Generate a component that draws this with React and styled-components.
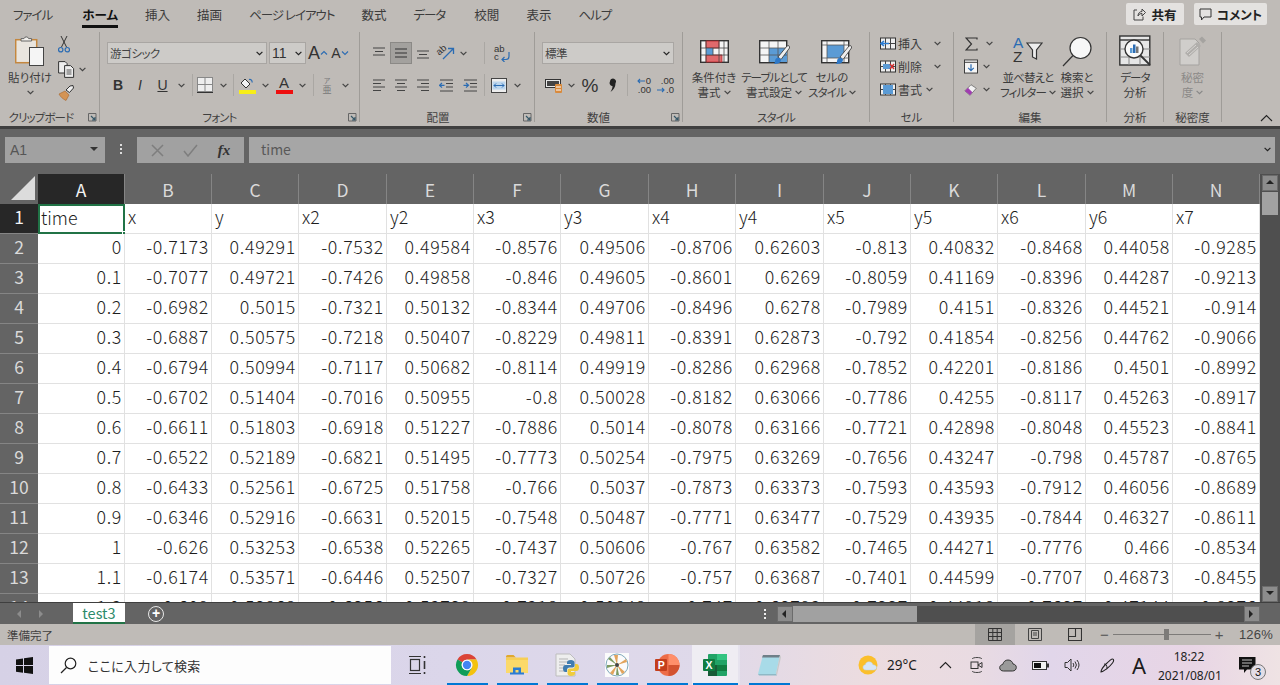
import React from "react";
import styled, { createGlobalStyle } from "styled-components";

const GlobalStyle = createGlobalStyle`
html, body {
  margin: 0;
  padding: 0;
  background: #bfbbb7;
}
* {
  box-sizing: border-box;
}
`

const jpFont = `"Noto Sans CJK JP", "Noto Sans", sans-serif`

const Page = styled.div`
width: 1280px;
height: 685px;
overflow: hidden;
display: flex;
flex-direction: column;
font-family: ${jpFont};
font-feature-settings: "palt";
color: #333;
`

/* ---------- tabs row ---------- */
const TabBar = styled.div`
height: 32px;
flex: none;
display: flex;
align-items: flex-start;
justify-content: space-between;
padding: 3px 13px 0 13px;
`
const TabList = styled.div`
display: flex;
gap: 27px;
`
const Tab = styled.div`
font-size: 12.5px;
line-height: 24px;
letter-spacing: ${p => (p.$kana ? "-1px" : "0")};
margin-right: ${p => p.$mr || 0}px;
color: ${p => (p.$active ? "#111" : "#3c3c3c")};
font-weight: ${p => (p.$active ? 700 : 400)};
border-bottom: ${p => (p.$active ? "3px solid #111" : "none")};
height: ${p => (p.$active ? "25px" : "24px")};
white-space: pre;
`
const TopButtons = styled.div`
display: flex;
gap: 10px;
`
const TopButton = styled.div`
height: 22px;
width: ${p => p.$w}px;
background: #e4e2e0;
border-radius: 2px;
display: flex;
align-items: center;
justify-content: center;
gap: 5px;
font-size: 12.5px;
font-weight: 700;
color: #222;
`

/* ---------- ribbon ---------- */
const Ribbon = styled.div`
height: 94px;
flex: none;
display: flex;
padding-bottom: 4px;
`
const Group = styled.section`
width: ${p => p.$w}px;
display: flex;
flex-direction: column;
border-right: 1px solid #9f9c98;
`
const GroupBody = styled.div`
height: 76px;
display: flex;
flex-direction: ${p => (p.$row ? "row" : "column")};
padding-left: ${p => p.$pl || 0}px;
`
const Caption = styled.div`
position: relative;
height: 14px;
line-height: 18px;
font-size: 11.5px;
text-align: center;
padding-right: ${p => p.$pr || 0}px;
letter-spacing: ${p => (p.$kana ? "-0.9px" : "0")};
color: #3f3f3f;
white-space: nowrap;
`
const Launcher = styled.span`
position: absolute;
right: 2px;
top: 5px;
display: flex;
`
const CollapseWrap = styled.div`
flex: 1;
display: flex;
justify-content: flex-end;
align-items: flex-end;
padding: 0 7px 0 0;
`
const ToolRow = styled.div`
display: flex;
align-items: center;
height: ${p => p.$h || 23}px;
margin-top: ${p => p.$mt || 0}px;
padding-left: ${p => p.$pl || 0}px;
`
const Slot = styled.span`
width: ${p => p.$w}px;
height: 22px;
display: flex;
flex: none;
align-items: center;
justify-content: center;
background: ${p => (p.$on ? "#a3a19e" : "transparent")};
border: ${p => (p.$on ? "1px solid #8b8986" : "none")};
`
const Sep = styled.span`
width: 1px;
height: 22px;
flex: none;
background: #aaa7a3;
margin-left: ${p => p.$ml || 0}px;
margin-right: ${p => p.$mr || 0}px;
`
const Combo = styled.div`
width: ${p => p.$w}px;
height: 22px;
flex: none;
margin-left: ${p => p.$ml || 0}px;
background: #cdcbc8;
border: 1px solid #a9a6a3;
display: flex;
align-items: center;
justify-content: space-between;
padding: 0 3px 0 2px;
font-size: 11.5px;
letter-spacing: -0.5px;
color: #444;
`
const BigButton = styled.div`
width: ${p => p.$w}px;
flex: none;
display: flex;
flex-direction: column;
align-items: center;
padding-top: ${p => p.$pt || 4}px;
font-size: 11.5px;
line-height: 15px;
color: ${p => (p.$dim ? "#8b8987" : "#3c3c3c")};
white-space: nowrap;
`
const BigIcon = styled.div`
height: ${p => p.$h || 34}px;
margin-left: ${p => p.$ml || 0}px;
display: flex;
align-items: flex-start;
justify-content: center;
`
const ButtonLine = styled.div`
display: flex;
align-items: center;
gap: 3px;
height: 15px;
letter-spacing: ${p => (p.$kana ? "-0.9px" : "0")};
`
const SmallColumn = styled.div`
display: flex;
flex-direction: column;
width: ${p => p.$w}px;
flex: none;
`
const CellLabel = styled.span`
font-size: 12px;
width: ${p => p.$w}px;
margin-left: 2px;
color: #3c3c3c;
`
const FontMark = styled.span`
font-family: "Liberation Sans", sans-serif;
font-size: ${p => p.$s || 14}px;
font-weight: ${p => (p.$b ? 700 : 400)};
font-style: ${p => (p.$i ? "italic" : "normal")};
text-decoration: ${p => (p.$u ? "underline" : "none")};
letter-spacing: 0;
color: #333;
line-height: 1;
`
const PhoneticMark = styled.span`
display: flex;
flex-direction: column;
align-items: center;
font-size: ${p => p.$s || 8}px;
line-height: 9px;
color: #777;
`

/* ---------- formula bar ---------- */
const FormulaBar = styled.div`
height: 48px;
flex: none;
background: #646464;
border-top: 3px solid #3f3f3f;
display: flex;
align-items: flex-start;
padding: 8px 5px 0 5px;
`
const NameBox = styled.div`
width: 100px;
height: 26px;
background: #a1a1a1;
display: flex;
align-items: center;
justify-content: space-between;
padding: 0 7px 0 5px;
font-family: "Liberation Sans", sans-serif;
font-size: 14px;
color: #555;
`
const Grip = styled.div`
width: 32px;
display: flex;
flex-direction: column;
align-items: center;
gap: 2px;
padding-top: 7px;
`
const Dot = styled.i`
width: 2px;
height: 2px;
background: ${p => p.$c || "#ddd"};
`
const FxBox = styled.div`
width: 107px;
height: 26px;
background: #a1a1a1;
display: flex;
align-items: center;
justify-content: space-around;
padding: 0 4px;
`
const FxMark = styled.span`
font-family: "Liberation Serif", serif;
font-style: italic;
font-weight: 700;
font-size: 15px;
color: #333;
`
const FormulaInput = styled.div`
flex: 1;
height: 26px;
margin-left: 5px;
background: #a6a6a6;
display: flex;
align-items: center;
justify-content: space-between;
padding: 0 4px 2px 12px;
font-size: 14px;
color: #595959;
`

/* ---------- sheet ---------- */
const SheetArea = styled.div`
height: 428px;
flex: none;
display: flex;
background: #646464;
`
const SheetBody = styled.div`
width: 1260px;
overflow: hidden;
`
const columns = "38px 87px 87px 87px 88px 87px 87px 88px 87px 88px 87px 87px 88px 87px 87px"
const SheetGrid = styled.div`
display: grid;
grid-template-columns: ${columns};
grid-auto-rows: 30px;
`
const Corner = styled.div`
background: #646464;
display: flex;
align-items: flex-end;
justify-content: flex-end;
padding: 0 2px 3px 0;
`
const ColHead = styled.div`
background: ${p => (p.$active ? "#272727" : "#646464")};
color: ${p => (p.$active ? "#f2f2f2" : "#dadada")};
border-right: 1px solid #858585;
display: flex;
align-items: center;
justify-content: center;
font-size: 17.5px;
`
const RowHead = styled.div`
background: ${p => (p.$active ? "#272727" : "#646464")};
color: ${p => (p.$active ? "#f2f2f2" : "#dadada")};
border-bottom: 1px solid #858585;
display: flex;
align-items: center;
justify-content: center;
padding-bottom: 5px;
font-size: 17.5px;
`
const Cell = styled.div`
position: relative;
background: #fff;
border-right: ${p => (p.$sel ? "2px solid #217346" : "1px solid #e1e1e1")};
border-bottom: ${p => (p.$sel ? "2px solid #217346" : "1px solid #e1e1e1")};
border-left: ${p => (p.$sel ? "2px solid #217346" : "none")};
border-top: ${p => (p.$sel ? "2px solid #217346" : "none")};
display: flex;
align-items: center;
justify-content: ${p => (p.$num ? "flex-end" : "flex-start")};
padding: 0 ${p => (p.$sel ? 2 : p.$num ? 2 : 3)}px 5px ${p => (p.$sel ? 1 : 3)}px;
font-size: 17.8px;
font-weight: 300;
letter-spacing: ${p => (p.$num ? "0.7px" : "0")};
color: #1d1d1d;
white-space: nowrap;
`
const Handle = styled.i`
position: absolute;
right: -4px;
bottom: -4px;
width: 5px;
height: 5px;
background: #217346;
border: 1px solid #fff;
`
const VScroll = styled.div`
width: 20px;
display: flex;
flex-direction: column;
align-items: center;
gap: 1px;
padding: 1px 0 0 0;
background: #4f4f4f;
`
const ScrollButton = styled.div`
width: ${p => p.$w || 16}px;
height: ${p => p.$h || 16}px;
flex: none;
background: #8c8c8c;
border: 1px solid #6b6b6b;
display: flex;
align-items: center;
justify-content: center;
`
const VThumb = styled.div`
width: 16px;
height: 23px;
background: #a1a1a1;
`
const Spacer = styled.div`
flex: 1;
`

/* ---------- sheet tabs ---------- */
const SheetTabs = styled.div`
height: 22px;
flex: none;
background: #646464;
border-top: 1px solid #3f3f3f;
display: flex;
align-items: center;
padding-left: 16px;
`
const NavArrows = styled.div`
width: 57px;
flex: none;
display: flex;
gap: 14px;
`
const SheetTab = styled.div`
width: 52px;
flex: none;
height: 21px;
margin-top: -1px;
background: #fff;
border-bottom: 2px solid #217346;
color: #2b8a6a;
font-size: 14.5px;
line-height: 19px;
text-align: center;
`
const AddSheet = styled.div`
width: 16px;
flex: none;
height: 16px;
margin-left: 23px;
border: 1.5px solid #e8e8e8;
border-radius: 50%;
color: #fff;
font: 700 14px/13px "Liberation Sans", sans-serif;
text-align: center;
`
const HScroll = styled.div`
flex: none;
width: 483px;
height: 16px;
display: flex;
background: #4f4f4f;
`
const HGrip = styled(Grip)`
width: 24px;
flex: none;
padding-top: 0;
margin-left: 589px;
`
const HThumb = styled.div`
width: 124px;
height: 16px;
background: #a1a1a1;
`

/* ---------- status bar ---------- */
const StatusBar = styled.div`
height: 21px;
flex: none;
display: flex;
align-items: center;
font-size: 11.5px;
color: #3f3f3f;
padding-left: 7px;
`
const ViewButton = styled.div`
width: 40px;
height: 21px;
display: flex;
align-items: center;
justify-content: center;
background: ${p => (p.$on ? "#a5a3a0" : "transparent")};
`
const StatusRight = styled.div`
margin-left: auto;
display: flex;
align-items: center;
`
const Zoom = styled.div`
display: flex;
align-items: center;
width: 133px;
gap: 4px;
padding-left: 5px;
font: 400 15px/1 "Liberation Sans", sans-serif;
color: #555;
`
const ZoomTrack = styled.div`
position: relative;
width: 98px;
height: 1px;
background: #7d7b79;
`
const ZoomThumb = styled.i`
position: absolute;
left: 51px;
top: -5px;
width: 5px;
height: 11px;
background: #7d7b79;
`
const ZoomValue = styled.div`
width: 52px;
padding-right: 7px;
text-align: right;
font-family: "Liberation Sans", sans-serif;
font-size: 13px;
letter-spacing: 0.2px;
color: #444;
`

/* ---------- windows taskbar ---------- */
const Taskbar = styled.div`
height: 40px;
flex: none;
display: flex;
align-items: center;
background: linear-gradient(90deg, #d6d1e6 0%, #dbd6ea 35%, #dfd9ea 55%, #ecdcdf 68%, #e9dbe2 76%, #e1d6ea 82%, #e8d5e5 93%, #efe3e4 100%);
`
const StartBtn = styled.div`
width: 49px;
display: flex;
justify-content: center;
`
const SearchBox = styled.div`
width: 342px;
height: 38px;
background: #fdfdfd;
display: flex;
align-items: center;
gap: 11px;
padding-left: 11px;
font-size: 13px;
color: #333;
letter-spacing: 0.35px;
`
const TaskItems = styled.div`
display: flex;
height: 40px;
margin-left: 1px;
`
const TaskItem = styled.div`
position: relative;
width: ${p => p.$w || 50}px;
height: 40px;
display: flex;
align-items: center;
justify-content: center;
background: ${p => (p.$on ? "#efedf3" : "transparent")};
border-right: ${p => (p.$on ? "2px solid #e6e3ee" : "none")};
`
const RunBar = styled.i`
position: absolute;
bottom: 0;
left: ${p => p.$l ?? 5}px;
right: ${p => p.$r ?? 4}px;
height: 2px;
background: #0078d4;
`
const Tray = styled.div`
display: flex;
align-items: center;
margin-left: auto;
height: 40px;
`
const TrayItem = styled.div`
width: ${p => p.$w}px;
flex: none;
display: flex;
align-items: center;
justify-content: center;
padding-left: ${p => p.$pl || 0}px;
font-family: "Noto Sans", sans-serif;
font-size: ${p => p.$fs || 13.5}px;
color: #1c1c1c;
`
const Clock = styled.div`
width: 62px;
flex: none;
margin-left: 8px;
padding-top: 1px;
text-align: center;
font-family: "Noto Sans", sans-serif;
font-size: 12px;
line-height: 19px;
color: #222;
white-space: nowrap;
`
const Notice = styled.div`
position: relative;
width: 60px;
flex: none;
padding-right: 6px;
display: flex;
justify-content: center;
`
const NoticeBadge = styled.span`
position: absolute;
right: 14px;
bottom: -6px;
width: 16px;
height: 16px;
border-radius: 50%;
background: #e2dde6;
border: 1px solid #777;
font: 400 11px/14px "Liberation Sans", sans-serif;
text-align: center;
color: #111;
`

/* ---------- icons ---------- */
const Chev = ({ c = "#444" }) => (
  <svg width="7" height="5" viewBox="0 0 7 5"><path d="M.6.8 3.5 3.7 6.4.8" fill="none" stroke={c} strokeWidth="1.2" /></svg>
)
const Corner45 = () => (
  <svg width="9" height="9" viewBox="0 0 9 9"><path d="M.5.5h7.5v7.5H.5z" fill="none" stroke="#666" /><path d="M3 3 7 7M4 7h3V4" fill="none" stroke="#356" strokeWidth="1.1" /></svg>
)
const Paste = () => (
  <svg width="30" height="30" viewBox="0 0 30 30">
    <rect x=".7" y="3.7" width="21" height="23" fill="#e9e5df" stroke="#c4873f" strokeWidth="1.5" />
    <path d="M6 5V2.6h3a2.4 2.4 0 0 1 4.6 0h3V5z" fill="#f1efec" stroke="#666" />
    <rect x="14.5" y="11.5" width="14" height="18" fill="#f5f5f5" stroke="#444" />
  </svg>
)
const Scissors = () => (
  <svg width="12" height="17" viewBox="0 0 12 17">
    <path d="M3 0l5.500 11M9 0 3.500 11" stroke="#333" fill="none" />
    <circle cx="2.700" cy="13.700" r="2.200" fill="none" stroke="#2b6cb3" strokeWidth="1.200" />
    <circle cx="9.300" cy="13.700" r="2.200" fill="none" stroke="#2b6cb3" strokeWidth="1.200" />
  </svg>
)
const Copy = () => (
  <svg width="17" height="17" viewBox="0 0 17 17">
    <path d="M.6.6h6.500l2 2V12H.6z" fill="#eee" stroke="#333" />
    <path d="M6.600 4.600h6l3 3v8.800h-9z" fill="#eee" stroke="#333" />
    <path d="M8.500 9h5M8.500 11h5M8.500 13h5" stroke="#555" />
  </svg>
)
const Painter = () => (
  <svg width="17" height="17" viewBox="0 0 17 17">
    <path d="M1 10l6-3 4 4-3 5.500C5 15 2.500 13 1 10z" fill="#d49455" stroke="#a8652a" strokeWidth=".6" />
    <path d="M8 6l4-4 3-.5.500 2.500-4 4.500z" fill="#eee" stroke="#333" />
  </svg>
)
const FontStep = ({ down }) => (
  <svg width="8" height="6" viewBox="0 0 8 6">
    <path d={down ? "M1 1.500l3 3 3-3" : "M1 4.500l3-3 3 3"} fill="none" stroke="#2b6cb3" strokeWidth="1.100" />
  </svg>
)
const BorderIcon = () => (
  <svg width="16" height="16" viewBox="0 0 16 16">
    <rect x=".5" y=".5" width="15" height="14" fill="#eee" stroke="#888" />
    <path d="M8 .5v14M.5 7.500h15" stroke="#888" />
    <path d="M0 15.500h16" stroke="#333" />
  </svg>
)
const FillIcon = () => (
  <svg width="17" height="17" viewBox="0 0 17 17">
    <path d="M6 2l5 5-4 4-5-5z" fill="#f2f2f2" stroke="#333" />
    <path d="M10 2.500c2-.5 3.500 1 3 3" fill="none" stroke="#2b6cb3" strokeWidth="1.200" />
    <rect y="13" width="17" height="4" fill="#f7ee18" />
  </svg>
)
const ColorMark = styled.span`
display: flex;
flex-direction: column;
align-items: center;
width: 17px;
font: 400 15px/14px "Liberation Sans", sans-serif;
color: #333;
`
const ColorBar = styled.i`
width: 17px;
height: 4px;
background: #ee0f0f;
`
const Lines = ({ d, on }) => (
  <svg width="14" height="14" viewBox="0 0 14 14"><path d={d} fill="none" stroke={on ? "#333" : "#444"} strokeWidth="1.200" /></svg>
)
const OrientMark = styled.span`
position: relative;
width: 20px;
height: 18px;
display: block;
`
const OrientText = styled.span`
position: absolute;
left: 0;
top: 1px;
font: 400 9.5px/10px "Liberation Sans", sans-serif;
color: #333;
transform: rotate(-42deg);
`
const OrientArrow = styled.svg`
position: absolute;
left: 0;
top: 0;
`
const Orient = () => (
  <OrientMark>
    <OrientText>ab</OrientText>
    <OrientArrow width="20" height="18" viewBox="0 0 20 18">
      <path d="M7 15 17 5M12 4.500h5.500v5.500" fill="none" stroke="#2b6cb3" strokeWidth="1.300" />
    </OrientArrow>
  </OrientMark>
)
const WrapMark = styled.span`
position: relative;
display: flex;
flex-direction: column;
width: 16px;
font: 400 9.5px/8.5px "Liberation Sans", sans-serif;
color: #333;
`
const WrapArrow = styled.svg`
position: absolute;
right: 0;
bottom: 0;
`
const Wrap = () => (
  <WrapMark>
    <span>ab</span>
    <span>c</span>
    <WrapArrow width="10" height="11" viewBox="0 0 10 11">
      <path d="M9 1v4.500a3 3 0 0 1-3 3H2M4.500 6 2 8.500 4.500 11" fill="none" stroke="#2b6cb3" strokeWidth="1.200" />
    </WrapArrow>
  </WrapMark>
)
const Indent = ({ out }) => (
  <svg width="15" height="13" viewBox="0 0 15 13">
    <path d="M1 1h13M7 4.500h7M7 8h7M1 12h13" stroke="#444" fill="none" />
    <path d={out ? "M5.500 6.300H.500M3 4 .500 6.300 3 8.600" : "M.500 6.300h5M3 4l2.500 2.300L3 8.600"} stroke="#2b6cb3" strokeWidth="1.200" fill="none" />
  </svg>
)
const Merge = () => (
  <svg width="16" height="15" viewBox="0 0 16 15">
    <rect x=".5" y=".5" width="15" height="14" fill="#eee" stroke="#444" />
    <rect x="1.500" y="3.500" width="13" height="8" fill="#bcd6ee" />
    <path d="M3 7.500h10M5 5.500l-2 2 2 2M11 5.500l2 2-2 2" stroke="#2b6cb3" fill="none" />
  </svg>
)
const Currency = () => (
  <svg width="17" height="17" viewBox="0 0 17 17">
    <rect x=".5" y="2.500" width="15" height="8" fill="#e8e8e8" stroke="#333" />
    <rect x="2" y="4" width="12" height="5" fill="#444" />
    <rect x="10" y="7" width="7" height="9" rx="1" fill="#d98a3c" />
    <path d="M11 10h5M11 13h5" stroke="#fff" />
  </svg>
)
const Comma = () => (
  <svg width="10" height="15" viewBox="0 0 10 15"><path d="M2 3.500a3 3 0 1 1 5.500 1.700C7.500 9 5.500 12 2.500 14c1.500-2.500 2-4 2-6A3 3 0 0 1 2 3.500z" fill="#222" /></svg>
)
const DecimalMark = styled.span`
display: flex;
flex-direction: column;
width: 20px;
font: 400 9.5px/9px "Liberation Sans", sans-serif;
color: #333;
`
const DecimalRow = styled.span`
display: flex;
align-items: center;
gap: 1px;
align-self: flex-end;
`
const Arrow = ({ left }) => (
  <svg width="8" height="6" viewBox="0 0 8 6"><path d={left ? "M8 3H1M3 1 1 3l2 2" : "M0 3h7M5 1l2 2-2 2"} stroke="#2b6cb3" fill="none" strokeWidth="1.100" /></svg>
)
const Decimal = ({ more }) => (
  more
    ? <DecimalMark>
        <DecimalRow><Arrow left />0</DecimalRow>
        <DecimalRow>.00</DecimalRow>
      </DecimalMark>
    : <DecimalMark>
        <DecimalRow>.00</DecimalRow>
        <DecimalRow><Arrow />.0</DecimalRow>
      </DecimalMark>
)
const CondFormat = () => (
  <svg width="29" height="23" viewBox="0 0 29 23">
    <rect x=".7" y=".7" width="27.600" height="21.600" fill="#f5f5f5" stroke="#333" strokeWidth="1.400" />
    <path d="M6 1h13v7H6zM6 15h16v7H6z" fill="#e0696c" stroke="#b3272c" strokeWidth=".8" />
    <rect x="6" y="8" width="7" height="7" fill="#5b9bd5" />
    <path d="M6 1v21M13 8v7M19 1v21M24 1v21M1 8h27M1 15h27" stroke="#444" fill="none" strokeWidth=".8" />
  </svg>
)
const Brush = () => (
  <g>
    <path d="M28 6 19 17l3 2.500L30.500 8c.5-2-1-3-2.500-2z" fill="#eee" stroke="#333" strokeWidth=".8" />
    <path d="M15 24c3 0 7-.5 7-4.500-1-2-3.500-2.500-5-1-1.500 1.500-.5 4-2 5.500z" fill="#2d78c8" />
  </g>
)
const TableFormat = () => (
  <svg width="31" height="27" viewBox="0 0 31 27">
    <rect x=".7" y=".7" width="27" height="22" fill="#f5f5f5" stroke="#333" strokeWidth="1.400" />
    <rect x="10" y="8" width="18" height="14" fill="#5b9bd5" />
    <path d="M10 1v21M19 1v21M1 8h27M1 15h27" stroke="#555" strokeWidth=".8" />
    <Brush />
  </svg>
)
const CellStyle = () => (
  <svg width="31" height="27" viewBox="0 0 31 27">
    <rect x=".7" y=".7" width="27" height="22" fill="#f5f5f5" stroke="#333" strokeWidth="1.400" />
    <rect x="6" y="5" width="17" height="13" fill="#5b9bd5" />
    <path d="M1 5h27M1 18h27M6 1v21M23 1v21" stroke="#555" strokeWidth=".8" />
    <Brush />
  </svg>
)
const CellOp = ({ kind }) => (
  <svg width="16" height="15" viewBox="0 0 16 15">
    <rect x=".5" y="2" width="15" height="11" fill="#eee" stroke="#333" />
    <path d="M5.500 2v11M10.500 2v11M.5 7.500h15" stroke="#444" />
    {kind === "ins" && <path d="M1 7.500h8M4 5 1 7.500 4 10" stroke="#2b7cd3" strokeWidth="1.600" fill="none" />}
    {kind === "del" && <g><rect x="3" y="5" width="8" height="5" fill="#5b9bd5" /><path d="M10 5l4 5M14 5l-4 5" stroke="#d12c2c" strokeWidth="1.400" /></g>}
    {kind === "fmt" && <rect x="3" y="3" width="10" height="9" fill="#5b9bd5" />}
  </svg>
)
const Sigma = () => (
  <svg width="13" height="14" viewBox="0 0 13 14"><path d="M12 2.500V1H1l5.500 6L1 13h11v-1.500" fill="none" stroke="#333" strokeWidth="1.200" /></svg>
)
const FillDown = () => (
  <svg width="15" height="15" viewBox="0 0 15 15">
    <rect x=".5" y=".5" width="14" height="14" fill="#f5f5f5" stroke="#333" />
    <path d="M.5 3h14" stroke="#333" />
    <path d="M7.500 5v7M4.500 9l3 3 3-3" stroke="#2b6cb3" strokeWidth="1.300" fill="none" />
  </svg>
)
const Eraser = () => (
  <svg width="16" height="14" viewBox="0 0 16 14">
    <path d="M1 8l7-7 6 4-7 8z" fill="#f2f2f2" stroke="#333" strokeWidth=".6" />
    <path d="M1 8l3.500-3.500 5 5L7 13z" fill="#a03db0" />
  </svg>
)
const SortWrap = styled.div`
display: flex;
align-items: flex-start;
width: 30px;
`
const SortLetters = styled.div`
display: flex;
flex-direction: column;
font: 400 15.5px/14px "Liberation Sans", sans-serif;
color: #333;
width: 13px;
flex: none;
`
const SortA = styled.span`
color: #2b6cb3;
`
const SortFilter = () => (
  <SortWrap>
    <SortLetters><SortA>A</SortA><span>Z</span></SortLetters>
    <svg width="17" height="24" viewBox="0 0 17 24"><path d="M1 7h15l-5.500 7v9l-4-2v-7z" fill="#eee" stroke="#333" strokeWidth="1.200" /></svg>
  </SortWrap>
)
const Search = () => (
  <svg width="30" height="31" viewBox="0 0 30 31">
    <circle cx="18.500" cy="12" r="10.500" fill="#f7f7f7" stroke="#333" strokeWidth="1.200" />
    <path d="M11 19.500 1 30" stroke="#333" strokeWidth="1.200" />
  </svg>
)
const Analyze = () => (
  <svg width="32" height="32" viewBox="0 0 32 32">
    <rect x=".8" y="1" width="30" height="29" fill="#e6e6e6" stroke="#333" strokeWidth="1.400" />
    <path d="M1 5h30" stroke="#333" strokeWidth="1.400" />
    <path d="M1 14h30M1 22h30M10 5v25M21 5v25" stroke="#888" />
    <circle cx="15" cy="14" r="9" fill="#fafafa" stroke="#333" strokeWidth="1.400" />
    <path d="M21.500 20.500 31 30" stroke="#333" strokeWidth="1.800" />
    <rect x="11" y="13" width="2.500" height="5" fill="#5b9bd5" />
    <rect x="14" y="9.500" width="2.500" height="8.500" fill="#2b6cb3" />
    <rect x="17" y="11.500" width="2.500" height="6.500" fill="#777" />
  </svg>
)
const Sensitivity = () => (
  <svg width="28" height="30" viewBox="0 0 28 30">
    <path d="M1 3h15l4 4v22H1z" fill="#d0cecb" stroke="#a5a3a0" />
    <path d="M6 17 18 6l4 4-12 11z" fill="#b0aeab" />
    <path d="M20 3l3-2.500 4 4-3 3z" fill="#a5a3a0" />
    <path d="M8 17l9-8M10 19l9-8" stroke="#d8d6d3" />
  </svg>
)
const ShareIcon = () => (
  <svg width="13" height="13" viewBox="0 0 13 13"><path d="M4 2H1v10h9V8.500M5 8c0-3 2-4.500 4-4.500V1l3.500 3.500L9 8V5.500C7.500 5.500 6 6 5 8z" fill="none" stroke="#444" /></svg>
)
const CommentIcon = () => (
  <svg width="13" height="13" viewBox="0 0 13 13"><path d="M1 1h11v8H5l-2.500 3V9H1z" fill="none" stroke="#333" /></svg>
)
const Tri = ({ dir = "up", c = "#222" }) => {
  const d = { up: "M0 5 4 1l4 4z", down: "M0 1h8L4 5z", left: "M5 0v8L1 4z", right: "M1 0v8l4-4z" }[dir]
  return <svg width="8" height="8" viewBox="0 0 8 8"><path d={d} fill={c} /></svg>
}
const WinLogo = () => (
  <svg width="17" height="17" viewBox="0 0 17 17"><path d="M0 2.400 7 1.400v6.700H0zM8 1.300 17 0v8.100H8zM0 9h7v6.700l-7-1zM8 9h9v8l-9-1.300z" fill="#111" /></svg>
)
const Magnifier = () => (
  <svg width="17" height="17" viewBox="0 0 17 17"><circle cx="10.500" cy="6.500" r="5.300" fill="none" stroke="#222" strokeWidth="1.200" /><path d="M6.500 10.500 1 16" stroke="#222" strokeWidth="1.300" /></svg>
)
const TaskView = () => (
  <svg width="19" height="20" viewBox="0 0 19 20">
    <path d="M1 1.500h12M1 18.500h12" stroke="#333" strokeWidth="1.200" />
    <rect x="2.500" y="4.500" width="9" height="11" fill="none" stroke="#333" strokeWidth="1.200" />
    <path d="M16.500 1v2M16.500 6v8M16.500 17v2" stroke="#333" strokeWidth="1.600" />
  </svg>
)
const Chrome = () => (
  <svg width="24" height="24" viewBox="0 0 24 24">
    <path d="M12 1A11 11 0 0 1 21.530 6.500H12A5.500 5.500 0 0 0 7.240 9.250L2.470 6.500A11 11 0 0 1 12 1z" fill="#db4437" />
    <path d="M21.530 6.500A11 11 0 0 1 12 23L16.760 14.750A5.500 5.500 0 0 0 12 6.500z" fill="#f4c20d" />
    <path d="M2.470 6.500A11 11 0 0 0 12 23L16.760 14.750A5.500 5.500 0 0 1 7.240 9.250z" fill="#0f9d58" />
    <circle cx="12" cy="12" r="5.300" fill="#fff" />
    <circle cx="12" cy="12" r="4.200" fill="#4285f4" />
  </svg>
)
const Folder = () => (
  <svg width="22" height="20" viewBox="0 0 22 20">
    <path d="M0 1.500A1.500 1.500 0 0 1 1.500 0h6L10 2.500H0z" fill="#e0a82e" />
    <rect y="2.500" width="22" height="15.500" fill="#f7cf55" />
    <path d="M0 5h22v13H0z" fill="#fbd96a" />
    <path d="M7 18v-5.500h8V18h-2.500v-3h-3v3z" fill="#2b7cd3" />
    <rect x="4" y="17.500" width="14" height="2" fill="#2b7cd3" />
  </svg>
)
const PyDoc = () => (
  <svg width="24" height="24" viewBox="0 0 24 24">
    <path d="M1 1h14l5 5v17H1z" fill="#eeeeee" stroke="#bdbdbd" />
    <path d="M4 6h9M4 9h11M4 12h6M4 15h6M4 18h7" stroke="#b5b5b5" />
    <path d="M16 7c-3 0-4 1-4 2.500V11h4v1h-5.500C9 12 8 13 8 15.500S9 19 10.500 19H12v-2c0-1.500 1-2.500 2.500-2.500h3c1.200 0 2-.8 2-2V9.500C19.500 8 18 7 16 7z" fill="#3f7cb0" />
    <path d="M16 23c3 0 4-1 4-2.500V19h-4v-1h5.500c1.500 0 2.500-1 2.500-3.500S23 11 21.500 11H20v2c0 1.500-1 2.500-2.500 2.500h-3c-1.200 0-2 .8-2 2v3C12.500 22 14 23 16 23z" fill="#f0cc3d" />
  </svg>
)
const Pinwheel = () => (
  <svg width="24" height="24" viewBox="0 0 24 24">
    <rect width="24" height="24" fill="#fbfbfb" />
    <circle cx="12" cy="12" r="11" fill="none" stroke="#7fa9bb" strokeWidth="1" />
    <path d="M12 12 9 2h4zM12 12l9-6 1 3zM12 12l8 7-3 2zM12 12 8 22l-3-2z" fill="#e2a45c" />
    <path d="M12 12 3 6l2-2zM12 12H2v3zM12 12l2 10h-3z" fill="#7c9a62" />
    <circle cx="12" cy="12" r="2" fill="#444" />
  </svg>
)
const Ppt = () => (
  <svg width="25" height="24" viewBox="0 0 25 24">
    <circle cx="13.500" cy="12" r="11" fill="#ed6c47" />
    <path d="M13.500 1a11 11 0 0 1 11 11h-11z" fill="#ff8f6b" />
    <path d="M13.500 12h11a11 11 0 0 1-11 11z" fill="#d35230" />
    <rect x="0" y="6" width="12" height="12" rx="1" fill="#c43e1c" />
    <text x="2.800" y="15.600" fontFamily="Liberation Sans" fontWeight="700" fontSize="10.500" fill="#fff">P</text>
  </svg>
)
const Excel = () => (
  <svg width="24" height="22" viewBox="0 0 24 22">
    <rect x="5" y="0" width="19" height="22" rx="1" fill="#21a366" />
    <rect x="14" y="0" width="10" height="6" fill="#33c481" />
    <rect x="5" y="11" width="9" height="11" fill="#185c37" />
    <rect x="14" y="11" width="10" height="6" fill="#107c41" />
    <rect x="0" y="5" width="12" height="12" rx="1" fill="#107c41" />
    <text x="2.500" y="14.700" fontFamily="Liberation Sans" fontWeight="700" fontSize="10.500" fill="#fff">X</text>
  </svg>
)
const Notepad = () => (
  <svg width="24" height="22" viewBox="0 0 24 22">
    <path d="M6 1h17l-4 19H1z" fill="#a8dbe8" />
    <path d="M6 1h17l-.6 2.500H5z" fill="#6f7f88" />
    <path d="M23 1l1 2-4 18-1-1z" fill="#c9c9c9" />
    <path d="M1 20h18l1 1.500H2z" fill="#8fb9c6" />
  </svg>
)
const Weather = () => (
  <svg width="22" height="22" viewBox="0 0 22 22">
    <circle cx="10" cy="11" r="9.500" fill="#fbbf2b" />
    <path d="M8 16c-2 0-3-1.300-3-2.700 0-1.300 1-2.300 2.300-2.500.5-2 2-3 3.700-3 2 0 3.500 1.300 3.800 3 2 0 3.700 1.100 3.700 2.800 0 1.500-1.200 2.400-2.800 2.400z" fill="#d6e6f7" stroke="#b9d2ec" strokeWidth=".5" />
  </svg>
)
const Caret = () => (
  <svg width="13" height="8" viewBox="0 0 13 8"><path d="M1 7 6.500 1.500 12 7" fill="none" stroke="#222" strokeWidth="1.100" /></svg>
)
const Meet = () => (
  <svg width="14" height="18" viewBox="0 0 14 18">
    <path d="M2 3C3 1 11 1 12 3M2 15c1 2 9 2 10 0" fill="none" stroke="#444" />
    <rect x="1" y="6" width="7" height="6.500" fill="none" stroke="#333" />
    <path d="M8 9l4-2.500v5z" fill="none" stroke="#333" />
  </svg>
)
const Cloud = () => (
  <svg width="18" height="13" viewBox="0 0 18 13"><path d="M4.500 12C2 12 .7 10.500.7 8.700S2 5.800 3.700 5.500C4.500 2.500 6.500 1 9 1c2.700 0 4.500 1.700 5 4 2 .2 3.300 1.500 3.300 3.400 0 2.100-1.500 3.600-3.800 3.600z" fill="#9a9a9a" stroke="#333" /></svg>
)
const Battery = () => (
  <svg width="17" height="9" viewBox="0 0 17 9">
    <rect x=".5" y=".5" width="14" height="8" fill="#f2f2f2" stroke="#333" />
    <rect x="2" y="2" width="7" height="5" fill="#111" />
    <rect x="15" y="2.500" width="2" height="4" fill="#333" />
  </svg>
)
const Volume = () => (
  <svg width="16" height="14" viewBox="0 0 16 14">
    <path d="M1 4.500h2.500L7 1v12L3.500 9.500H1z" fill="none" stroke="#333" />
    <path d="M9 5a3 3 0 0 1 0 4M11 3.500a5.500 5.500 0 0 1 0 7M13 2a8 8 0 0 1 0 10" fill="none" stroke="#333" />
  </svg>
)
const Pen = () => (
  <svg width="15" height="15" viewBox="0 0 15 15">
    <path d="M1 14c0-2 2-5 5-8s5-5 6.500-5S14 3 12.500 5 9 9 7 10.500c-2 1.500-4 3.500-6 3.500z" fill="none" stroke="#222" strokeWidth="1.100" />
    <path d="M4 6c2 0 3 1.500 3 4" fill="none" stroke="#222" />
  </svg>
)
const NoticeIcon = () => (
  <svg width="17" height="17" viewBox="0 0 17 17">
    <path d="M0 0h16.500v12.500H8L5 16v-3.500H0z" fill="#111" />
    <path d="M3 3h10M3 6h10M3 9h7" stroke="#eee" strokeWidth=".8" />
  </svg>
)
const GridView = () => (
  <svg width="14" height="13" viewBox="0 0 14 13"><path d="M.5.5h13v12H.5zM.5 4.500h13M.5 8.500h13M4.800.5v12M9.200.5v12" fill="none" stroke="#333" /></svg>
)
const PageView = () => (
  <svg width="14" height="13" viewBox="0 0 14 13"><path d="M.5.5h13v12H.5zM3.500 2.500h7v8h-7zM5 5h4M5 7h4" fill="none" stroke="#444" /></svg>
)
const BreakView = () => (
  <svg width="14" height="13" viewBox="0 0 14 13"><path d="M.5.500h13v12H.5zM.5 8.500h7V.5" fill="none" stroke="#333" strokeWidth="1.100" /></svg>
)

/* ---------- data ---------- */
const colNames = ["A", "B", "C", "D", "E", "F", "G", "H", "I", "J", "K", "L", "M", "N"]
const firstRow = ["time", "x", "y", "x2", "y2", "x3", "y3", "x4", "y4", "x5", "y5", "x6", "y6", "x7"]
const dataRows = [
  "0 -0.7173 0.49291 -0.7532 0.49584 -0.8576 0.49506 -0.8706 0.62603 -0.813 0.40832 -0.8468 0.44058 -0.9285",
  "0.1 -0.7077 0.49721 -0.7426 0.49858 -0.846 0.49605 -0.8601 0.6269 -0.8059 0.41169 -0.8396 0.44287 -0.9213",
  "0.2 -0.6982 0.5015 -0.7321 0.50132 -0.8344 0.49706 -0.8496 0.6278 -0.7989 0.4151 -0.8326 0.44521 -0.914",
  "0.3 -0.6887 0.50575 -0.7218 0.50407 -0.8229 0.49811 -0.8391 0.62873 -0.792 0.41854 -0.8256 0.44762 -0.9066",
  "0.4 -0.6794 0.50994 -0.7117 0.50682 -0.8114 0.49919 -0.8286 0.62968 -0.7852 0.42201 -0.8186 0.4501 -0.8992",
  "0.5 -0.6702 0.51404 -0.7016 0.50955 -0.8 0.50028 -0.8182 0.63066 -0.7786 0.4255 -0.8117 0.45263 -0.8917",
  "0.6 -0.6611 0.51803 -0.6918 0.51227 -0.7886 0.5014 -0.8078 0.63166 -0.7721 0.42898 -0.8048 0.45523 -0.8841",
  "0.7 -0.6522 0.52189 -0.6821 0.51495 -0.7773 0.50254 -0.7975 0.63269 -0.7656 0.43247 -0.798 0.45787 -0.8765",
  "0.8 -0.6433 0.52561 -0.6725 0.51758 -0.766 0.5037 -0.7873 0.63373 -0.7593 0.43593 -0.7912 0.46056 -0.8689",
  "0.9 -0.6346 0.52916 -0.6631 0.52015 -0.7548 0.50487 -0.7771 0.63477 -0.7529 0.43935 -0.7844 0.46327 -0.8611",
  "1 -0.626 0.53253 -0.6538 0.52265 -0.7437 0.50606 -0.767 0.63582 -0.7465 0.44271 -0.7776 0.466 -0.8534",
  "1.1 -0.6174 0.53571 -0.6446 0.52507 -0.7327 0.50726 -0.757 0.63687 -0.7401 0.44599 -0.7707 0.46873 -0.8455",
  "1.2 -0.609 0.53868 -0.6356 0.52739 -0.7218 0.50848 -0.747 0.63792 -0.7337 0.44918 -0.7637 0.47144 -0.8376",
].map(r => r.split(" "))

const tabs = [
  { t: "ファイル", kana: true, mr: 3 },
  { t: "ホーム", active: true },
  { t: "挿入" },
  { t: "描画" },
  { t: "ページ レイアウト", kana: true },
  { t: "数式" },
  { t: "データ", kana: true, mr: 2 },
  { t: "校閲" },
  { t: "表示" },
  { t: "ヘルプ", kana: true },
]

const ALIGN = {
  top: "M1 2h12M3 5.500h8M1 9h12",
  mid: "M1 3h12M1 7h12M1 11h12",
  bottom: "M1 5h12M3 8.500h8M1 12h12",
  left: "M1 2h12M1 5.500h8M1 9h12M1 12.500h8",
  center: "M1 2h12M3 5.500h8M1 9h12M3 12.500h8",
  right: "M1 2h12M5 5.500h8M1 9h12M5 12.500h8",
}

const Clipboard = () => (
  <Group $w={100}>
    <GroupBody $row $pl={2}>
      <BigButton $w={56} $pt={4}>
        <BigIcon><Paste /></BigIcon>
        <ButtonLine>貼り付け</ButtonLine>
        <ButtonLine><Chev /></ButtonLine>
      </BigButton>
      <SmallColumn $w={36}>
        <ToolRow $h={25}><Scissors /></ToolRow>
        <ToolRow $h={24}><Copy /><Slot $w={14}><Chev /></Slot></ToolRow>
        <ToolRow><Painter /></ToolRow>
      </SmallColumn>
    </GroupBody>
    <Caption $pr={17} $kana>クリップボード<Launcher><Corner45 /></Launcher></Caption>
  </Group>
)

const FontGroup = () => (
  <Group $w={260}>
    <GroupBody>
      <ToolRow $h={22} $mt={10} $pl={7}>
        <Combo $w={160}>游ゴシック<Chev c="#222" /></Combo>
        <Combo $w={37} $ml={2}><FontMark $s={14}>11</FontMark><Chev c="#222" /></Combo>
        <Slot $w={24}><FontMark $s={18}>A</FontMark><FontStep /></Slot>
        <Slot $w={20}><FontMark $s={14}>A</FontMark><FontStep down /></Slot>
      </ToolRow>
      <ToolRow $h={24} $mt={9} $pl={7}>
        <Slot $w={22}><FontMark $b>B</FontMark></Slot>
        <Slot $w={22}><FontMark $i>I</FontMark></Slot>
        <Slot $w={23}><FontMark $u>U</FontMark></Slot>
        <Slot $w={14}><Chev /></Slot>
        <Slot $w={8}><Sep /></Slot>
        <Slot $w={18}><BorderIcon /></Slot>
        <Slot $w={18}><Chev /></Slot>
        <Slot $w={2}><Sep /></Slot>
        <Slot $w={26}><FillIcon /></Slot>
        <Slot $w={10}><Chev /></Slot>
        <Slot $w={28}><ColorMark>A<ColorBar /></ColorMark></Slot>
        <Slot $w={8}><Chev /></Slot>
        <Slot $w={14}><Sep /></Slot>
        <Slot $w={14}>
          <PhoneticMark $s={7}>ア<PhoneticMark $s={9}>亜</PhoneticMark></PhoneticMark>
        </Slot>
        <Slot $w={22}><Chev /></Slot>
      </ToolRow>
    </GroupBody>
    <Caption $pr={20} $kana>フォント<Launcher><Corner45 /></Launcher></Caption>
  </Group>
)

const AlignGroup = () => (
  <Group $w={175}>
    <GroupBody>
      <ToolRow $h={22} $mt={10} $pl={8}>
        <Slot $w={22}><Lines d={ALIGN.top} /></Slot>
        <Slot $w={22} $on><Lines d={ALIGN.mid} on /></Slot>
        <Slot $w={22}><Lines d={ALIGN.bottom} /></Slot>
        <Slot $w={24}><Orient /></Slot>
        <Slot $w={10}><Chev /></Slot>
        <Sep $ml={16} $mr={7} />
        <Slot $w={20}><Wrap /></Slot>
      </ToolRow>
      <ToolRow $h={24} $mt={9} $pl={8}>
        <Slot $w={22}><Lines d={ALIGN.left} /></Slot>
        <Slot $w={22}><Lines d={ALIGN.center} /></Slot>
        <Slot $w={22}><Lines d={ALIGN.right} /></Slot>
        <Slot $w={24}><Indent out /></Slot>
        <Slot $w={24}><Indent /></Slot>
        <Sep $ml={2} />
        <Slot $w={28}><Merge /></Slot>
        <Slot $w={8}><Chev /></Slot>
      </ToolRow>
    </GroupBody>
    <Caption $pr={18}>配置<Launcher><Corner45 /></Launcher></Caption>
  </Group>
)

const NumberGroup = () => (
  <Group $w={148}>
    <GroupBody>
      <ToolRow $h={22} $mt={10}>
        <Combo $w={132} $ml={7}>標準<Chev c="#222" /></Combo>
      </ToolRow>
      <ToolRow $h={24} $mt={9} $pl={7}>
        <Slot $w={22}><Currency /></Slot>
        <Slot $w={14}><Chev /></Slot>
        <Slot $w={24}><FontMark $s={19}>%</FontMark></Slot>
        <Slot $w={22}><Comma /></Slot>
        <Sep $ml={3} />
        <Slot $w={26}><Decimal more /></Slot>
        <Slot $w={20}><Decimal /></Slot>
      </ToolRow>
    </GroupBody>
    <Caption $pr={20}>数値<Launcher><Corner45 /></Launcher></Caption>
  </Group>
)

const StyleGroup = () => (
  <Group $w={187}>
    <GroupBody $row $pl={6}>
      <BigButton $w={50} $pt={8}>
        <BigIcon $h={30}><CondFormat /></BigIcon>
        <ButtonLine>条件付き</ButtonLine>
        <ButtonLine>書式 <Chev /></ButtonLine>
      </BigButton>
      <BigButton $w={70} $pt={8}>
        <BigIcon $h={30}><TableFormat /></BigIcon>
        <ButtonLine $kana>テーブルとして</ButtonLine>
        <ButtonLine>書式設定 <Chev /></ButtonLine>
      </BigButton>
      <BigButton $w={46} $pt={8}>
        <BigIcon $h={30} $ml={8}><CellStyle /></BigIcon>
        <ButtonLine>セルの</ButtonLine>
        <ButtonLine $kana>スタイル <Chev /></ButtonLine>
      </BigButton>
    </GroupBody>
    <Caption $kana>スタイル</Caption>
  </Group>
)

const CellsGroup = () => (
  <Group $w={84}>
    <GroupBody $pl={10}>
      <ToolRow><CellOp kind="ins" /><CellLabel $w={30}>挿入</CellLabel><Slot $w={18}><Chev /></Slot></ToolRow>
      <ToolRow><CellOp kind="del" /><CellLabel $w={30}>削除</CellLabel><Slot $w={18}><Chev /></Slot></ToolRow>
      <ToolRow><CellOp kind="fmt" /><CellLabel $w={26}>書式</CellLabel><Slot $w={10}><Chev /></Slot></ToolRow>
    </GroupBody>
    <Caption>セル</Caption>
  </Group>
)

const EditGroup = () => (
  <Group $w={153}>
    <GroupBody $row>
      <SmallColumn $w={45}>
        <ToolRow $pl={10}><Slot $w={14}><Sigma /></Slot><Slot $w={22}><Chev /></Slot></ToolRow>
        <ToolRow $pl={10}><Slot $w={14}><FillDown /></Slot><Slot $w={16}><Chev /></Slot></ToolRow>
        <ToolRow $pl={10}><Slot $w={14}><Eraser /></Slot><Slot $w={16}><Chev /></Slot></ToolRow>
      </SmallColumn>
      <BigButton $w={58} $pt={4}>
        <BigIcon><SortFilter /></BigIcon>
        <ButtonLine $kana>並べ替えと</ButtonLine>
        <ButtonLine $kana>フィルター <Chev /></ButtonLine>
      </BigButton>
      <BigButton $w={40} $pt={4}>
        <BigIcon><Search /></BigIcon>
        <ButtonLine>検索と</ButtonLine>
        <ButtonLine>選択 <Chev /></ButtonLine>
      </BigButton>
    </GroupBody>
    <Caption>編集</Caption>
  </Group>
)

const SheetTable = () => (
  <SheetGrid>
    <Corner>
      <svg width="26" height="26" viewBox="0 0 26 26"><path d="M25 1v24H1z" fill="#dcdcdc" /></svg>
    </Corner>
    {colNames.map((c, i) => <ColHead key={c} $active={i === 0}>{c}</ColHead>)}
    <RowHead $active>1</RowHead>
    {firstRow.map((t, i) => (
      <Cell key={t} $sel={i === 0}>
        {t}
        {i === 0 && <Handle />}
      </Cell>
    ))}
    {dataRows.map((row, i) => (
      <React.Fragment key={i}>
        <RowHead>{i + 2}</RowHead>
        {row.map((v, j) => <Cell key={j} $num>{v}</Cell>)}
      </React.Fragment>
    ))}
  </SheetGrid>
)

const App = () => {
  return (
    <Page>
      <GlobalStyle />
      <TabBar>
        <TabList>
          {tabs.map(({ t, active, kana, mr }) => <Tab key={t} $active={active} $kana={kana} $mr={mr}>{t}</Tab>)}
        </TabList>
        <TopButtons>
          <TopButton $w={58}><ShareIcon />共有</TopButton>
          <TopButton $w={73}><CommentIcon />コメント</TopButton>
        </TopButtons>
      </TabBar>

      <Ribbon>
        <Clipboard />
        <FontGroup />
        <AlignGroup />
        <NumberGroup />
        <StyleGroup />
        <CellsGroup />
        <EditGroup />
        <Group $w={57}>
          <GroupBody $row>
            <BigButton $w={56} $pt={3}>
              <BigIcon $h={35}><Analyze /></BigIcon>
              <ButtonLine $kana>データ</ButtonLine>
              <ButtonLine>分析</ButtonLine>
            </BigButton>
          </GroupBody>
          <Caption>分析</Caption>
        </Group>
        <Group $w={58}>
          <GroupBody $row>
            <BigButton $w={57} $pt={4} $dim>
              <BigIcon><Sensitivity /></BigIcon>
              <ButtonLine>秘密</ButtonLine>
              <ButtonLine>度 <Chev c="#888" /></ButtonLine>
            </BigButton>
          </GroupBody>
          <Caption>秘密度</Caption>
        </Group>
        <CollapseWrap><Caret /></CollapseWrap>
      </Ribbon>

      <FormulaBar>
        <NameBox>A1<Tri dir="down" c="#333" /></NameBox>
        <Grip><Dot /><Dot /><Dot /></Grip>
        <FxBox>
          <svg width="13" height="13" viewBox="0 0 13 13"><path d="M1 1l11 11M12 1 1 12" stroke="#7e7e7e" strokeWidth="1.500" /></svg>
          <svg width="15" height="13" viewBox="0 0 15 13"><path d="M1 7l4 5L14 1" fill="none" stroke="#7e7e7e" strokeWidth="1.500" /></svg>
          <FxMark>fx</FxMark>
        </FxBox>
        <FormulaInput>time<Chev c="#222" /></FormulaInput>
      </FormulaBar>

      <SheetArea>
        <SheetBody><SheetTable /></SheetBody>
        <VScroll>
          <ScrollButton><Tri c="#222" /></ScrollButton>
          <VThumb />
          <Spacer />
          <ScrollButton><Tri dir="down" c="#222" /></ScrollButton>
        </VScroll>
      </SheetArea>

      <SheetTabs>
        <NavArrows><Tri dir="left" c="#8c8c8c" /><Tri dir="right" c="#8c8c8c" /></NavArrows>
        <SheetTab>test3</SheetTab>
        <AddSheet>+</AddSheet>
        <HGrip><Dot $c="#eee" /><Dot $c="#eee" /><Dot $c="#eee" /></HGrip>
        <HScroll>
          <ScrollButton><Tri dir="left" c="#222" /></ScrollButton>
          <HThumb />
          <Spacer />
          <ScrollButton><Tri dir="right" c="#222" /></ScrollButton>
        </HScroll>
      </SheetTabs>

      <StatusBar>
        準備完了
        <StatusRight>
          <ViewButton $on><GridView /></ViewButton>
          <ViewButton><PageView /></ViewButton>
          <ViewButton><BreakView /></ViewButton>
          <Zoom>−<ZoomTrack><ZoomThumb /></ZoomTrack>+</Zoom>
          <ZoomValue>126%</ZoomValue>
        </StatusRight>
      </StatusBar>

      <Taskbar>
        <StartBtn><WinLogo /></StartBtn>
        <SearchBox><Magnifier />ここに入力して検索</SearchBox>
        <TaskItems>
          <TaskItem><TaskView /></TaskItem>
          <TaskItem><Chrome /><RunBar /></TaskItem>
          <TaskItem><Folder /><RunBar /></TaskItem>
          <TaskItem><PyDoc /><RunBar /></TaskItem>
          <TaskItem><Pinwheel /><RunBar /></TaskItem>
          <TaskItem><Ppt /><RunBar /></TaskItem>
          <TaskItem $w={48} $on><Excel /><RunBar $l={1} $r={0} /></TaskItem>
          <TaskItem $w={58}><Notepad /><RunBar $l={9} $r={8} /></TaskItem>
        </TaskItems>
        <Tray>
          <TrayItem $w={22}><Weather /></TrayItem>
          <TrayItem $w={44}>29°C</TrayItem>
          <TrayItem $w={37} $pl={5}><Caret /></TrayItem>
          <TrayItem $w={32}><Meet /></TrayItem>
          <TrayItem $w={30}><Cloud /></TrayItem>
          <TrayItem $w={34}><Battery /></TrayItem>
          <TrayItem $w={30}><Volume /></TrayItem>
          <TrayItem $w={41}><Pen /></TrayItem>
          <TrayItem $w={22} $fs={22}>A</TrayItem>
          <Clock>18:22<br />2021/08/01</Clock>
          <Notice><NoticeIcon /><NoticeBadge>3</NoticeBadge></Notice>
        </Tray>
      </Taskbar>
    </Page>
  );
};

export default App;
